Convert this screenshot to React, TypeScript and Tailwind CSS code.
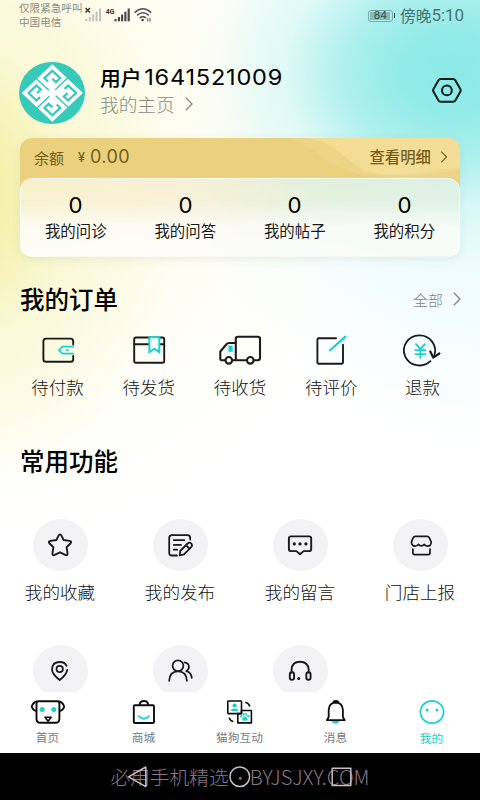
import type { ReactNode } from "react";

const INK = "#1b1b1b";
const TEAL = "#16d3cf";

type IconProps = { box: string; w: number; h: number; sw?: number; color?: string; children: ReactNode };

// Every icon shares the screen's coordinate grid through its viewBox.
function Icon({ box, w, h, sw = 1.9, color = INK, children }: IconProps) {
  return (
    <svg
      width={w}
      height={h}
      viewBox={box}
      fill="none"
      stroke={color}
      strokeWidth={sw}
      strokeLinecap="round"
      strokeLinejoin="round"
      className="block shrink-0"
    >
      {children}
    </svg>
  );
}

function Chevron({ className }: { className: string }) {
  return (
    <svg width="8" height="14" viewBox="0 0 8 14" fill="none" stroke="currentColor" strokeWidth="1.3" className={className}>
      <path d="M0.8 0.8 7 7 0.8 13.2" />
    </svg>
  );
}

function StatusBar() {
  return (
    <div className="flex h-[31px] items-start justify-between pr-4 pl-[19px]">
      <div className="flex">
        <div className="pt-px text-[10.6px] leading-[13.6px] text-[#8b8b83]">
          <div className="w-[64px] whitespace-nowrap">仅限紧急呼叫</div>
          <div>中国电信</div>
        </div>
        <svg width="70" height="31" viewBox="83 0 70 31" fill="none" className="block">
          <path d="M85.5 8l4.5 4.5M90 8l-4.5 4.5" stroke="#333" strokeWidth="1.4" />
          <g fill="#c3c3bd">
            <rect x="85.3" y="19" width="2" height="2.3" />
            <rect x="88.8" y="17" width="2" height="4.3" />
            <rect x="92.2" y="14.5" width="2" height="6.8" />
            <rect x="95.6" y="11.7" width="2" height="9.6" />
            <rect x="99" y="8.5" width="2" height="12.8" />
          </g>
          <text x="105.8" y="13.5" fontSize="7.5" fontWeight="700" fill="#333" className="font-['Roboto',sans-serif]" textLength="8.6" lengthAdjust="spacingAndGlyphs">4G</text>
          <g fill="#4a4a4a">
            <rect x="114.4" y="19" width="2.2" height="2.3" />
            <rect x="117.8" y="17" width="2.2" height="4.3" />
            <rect x="121" y="14.5" width="2.2" height="6.8" />
            <rect x="124.3" y="11.7" width="2.2" height="9.6" />
            <rect x="127.6" y="8.5" width="2.2" height="12.8" />
          </g>
          <g stroke="#555" strokeWidth="1.5">
            <path d="M134.6 12.6Q143 5 151.2 12.6" />
            <path d="M137 15.4Q143 10 148.8 15.4" />
            <path d="M139.6 18Q143 15.2 146.2 18" />
          </g>
          <circle cx="142.6" cy="20" r="1.3" fill="#444" />
          <path d="M147.8 18.2v3.4M150 18.2v3.4" stroke="#555" strokeWidth="1.1" />
        </svg>
      </div>
      <div className="flex h-[31px] items-center text-[#4d716f]">
        <div className="flex h-[12px] w-[25px] items-center rounded-[3px] border border-[#7ba9a7] p-px">
          <div className="flex h-full w-[20px] items-center justify-center bg-[#86bbb8] pt-px pl-[2px] font-['Inter',sans-serif] text-[10.5px] leading-none text-[#30504f]">84</div>
        </div>
        <div className="mr-[5px] ml-px h-[5px] w-[1.5px] bg-[#30504f]" />
        <span className="text-[15.8px] leading-none whitespace-nowrap">傍晚</span>
        <span className="font-['Roboto',sans-serif] text-[17px] leading-none tracking-[-0.1px]">5:10</span>
      </div>
    </div>
  );
}

// One quarter of the knot: a spiral channel cut into the white diamond.
function KnotQuarter({ turn }: { turn: number }) {
  return (
    <g transform={`rotate(${turn})`}>
      <path d="M-11.800 -5.600H-16.800V-16.800H-5.600V-10.800H-10.800" />
      <path d="M-0.400 -22V-4.500" strokeWidth="1.500" />
    </g>
  );
}

function Avatar() {
  return (
    <svg width="66" height="62" viewBox="19 62.3 66 62" className="block">
      <ellipse cx="52" cy="93.3" rx="33" ry="31" fill="#37cabb" />
      <g transform="translate(52.3 93.3) scale(1 .94) rotate(45)" fill="none" stroke="#37cabb" strokeWidth="2.3">
        <rect x="-21.600" y="-21.600" width="43.200" height="43.200" fill="#fff" stroke="none" />
        <KnotQuarter turn={0} />
        <KnotQuarter turn={90} />
        <KnotQuarter turn={180} />
        <KnotQuarter turn={270} />
      </g>
    </svg>
  );
}

function Profile() {
  return (
    <div className="flex h-[107px] items-start pr-[18px] pl-[19px]">
      <div className="pt-[31px]">
        <Avatar />
      </div>
      <div className="ml-[15px] flex-1 pt-[33px]">
        <div className="flex h-[25px] items-center pt-px text-[20.8px] leading-none font-medium whitespace-nowrap text-black">
          用户
          <span className="inline-block origin-left scale-x-[1.12] pl-[2px] font-['Inter',sans-serif] text-[21px] font-normal tracking-[0.7px]">1641521009</span>
        </div>
        <div className="mt-[4px] flex h-[22px] items-center text-[18.7px] leading-none font-light text-[#858b89]">
          我的主页
          <Chevron className="ml-[10px]" />
        </div>
      </div>
      <div className="pt-[45px]">
        <Icon box="432 76 30 29" w={30} h={29} sw={2} color="#0a1a1a">
          <path d="M440.7 79h12.4q1.4 0 2.2 1.3l5 8.7q.8 1.4 0 2.8l-5 8.7q-.8 1.3-2.2 1.3h-12.4q-1.4 0-2.2-1.3l-5-8.7q-.8-1.4 0-2.8l5-8.7q.8-1.3 2.2-1.3z" />
          <circle cx="446.9" cy="90.4" r="4.9" />
        </Icon>
      </div>
    </div>
  );
}

const stats = ["我的问诊", "我的问答", "我的帖子", "我的积分"];

function BalanceCard() {
  return (
    <div className="relative mx-5 h-[119px] rounded-[12px] shadow-[0_3px_10px_rgba(80,120,110,0.10)]">
      <svg width="440" height="60" viewBox="20 138 440 60" className="absolute top-0 left-0 block rounded-t-[12px]">
        <rect x="20" y="138" width="440" height="60" fill="#ebd17d" />
        <path d="M285 138C320 142 320 178 400 178H460V138z" fill="#edd587" />
        <path d="M303 138C345 140 345 174 390 174.500C420 174.500 440 168 460 168V138z" fill="#f3dd95" />
        <path d="M362 172C400 178 430 176 460 169V138H340z" fill="#f4df98" opacity=".4" />
      </svg>
      <div className="relative flex h-[38px] items-center pr-[12px] pl-[14px] text-[#756016]">
        <span className="text-[15px] leading-none font-normal">余额</span>
        <span className="ml-[14px] pt-[2px] font-['Inter',sans-serif] text-[12.500px] leading-none font-medium">¥</span>
        <span className="ml-[5px] font-['Inter',sans-serif] text-[18px] leading-none tracking-[0.4px]">0.00</span>
        <span className="ml-auto text-[15.4px] leading-none font-medium">查看明细</span>
        <Chevron className="ml-[9px] h-[12px]" />
      </div>
      <div className="relative mt-[2px] grid h-[79px] grid-cols-4 rounded-[12px] border border-white/60 bg-[linear-gradient(180deg,rgba(255,255,255,0)_0%,rgba(255,255,255,0.1)_30%,rgba(255,255,255,0.75)_62%,rgba(255,255,255,0.8)_100%),linear-gradient(90deg,#f8f1cb_0%,#f8f0d6_38%,#e2f0dd_68%,#dcf1e4_100%)]">
        {stats.map((label) => (
          <div key={label} className="flex flex-col items-center">
            <span className="mt-[15px] inline-block scale-x-[1.06] font-['Inter',sans-serif] text-[21px] leading-[24px] text-black">0</span>
            <span className="mt-[3px] text-[15.4px] leading-[18px] text-[#181818]">{label}</span>
          </div>
        ))}
      </div>
    </div>
  );
}

const orders: { label: string; icon: ReactNode }[] = [
  {
    label: "待付款",
    icon: (
      <Icon box="33.6 330 48 40" w={48} h={40}>
        <path d="M72.800 344.500V341.300Q72.800 338.600 70.200 338.600H45.600Q43 338.600 43 341.300V359.200Q43 361.800 45.600 361.800H70.200Q72.800 361.800 72.800 359.200V356" />
        <path d="M73.500 346.600H62.200L58.500 350.100 62.200 353.600H73.500M65.600 350.100H68.200" stroke={TEAL} strokeWidth="1.700" strokeLinecap="butt" />
      </Icon>
    ),
  },
  {
    label: "待发货",
    icon: (
      <Icon box="125 330 48 40" w={48} h={40}>
        <rect x="134.200" y="337.500" width="30" height="25.200" rx="1.800" />
        <path d="M134.200 344.300H164.200" />
        <path d="M149.400 337.200V352L154.300 348.600 159.300 352V337.200z" fill="#fff" stroke={TEAL} strokeWidth="2" strokeLinejoin="miter" />
      </Icon>
    ),
  },
  {
    label: "待收货",
    icon: (
      <Icon box="216 330 48 40" w={48} h={40} sw={2.1}>
        <path d="M224.500 360.200H221.500Q220.300 360.200 220.300 358.500V351.500L226.500 344.200Q227.500 343 229 343H235.200M235.800 360.200V338.800Q235.800 336.800 237.800 336.800H257.800Q260 336.800 260 339V358Q260 360.200 257.500 360.200H254.200M233 360.200H246.200" />
        <circle cx="228.800" cy="360.300" r="3.300" />
        <circle cx="250.300" cy="360.300" r="3.300" />
        <rect x="228.400" y="345.500" width="4.300" height="6.300" fill={TEAL} stroke="none" />
      </Icon>
    ),
  },
  {
    label: "待评价",
    icon: (
      <Icon box="307 330 48 40" w={48} h={40}>
        <path d="M336 338.300H318.800Q317.400 338.300 317.400 339.700V362Q317.400 363.700 319 363.700H341.500Q343 363.700 343 362V344.800" />
        <path d="M329.800 350.500 345.400 336.600" stroke={TEAL} strokeWidth="2.100" />
      </Icon>
    ),
  },
  {
    label: "退款",
    icon: (
      <Icon box="398.4 330 48 40" w={48} h={40} sw={1.8}>
        <path d="M430.800 361.200A15.600 15 0 1 1 434.600 355.500" />
        <path d="M430.700 351.500 433.600 357.600 439.800 353.500" strokeWidth="2.200" />
        <path d="M416.400 344.200 420.800 349.200 425.200 344.200M420.800 349.500V357.800M415.800 350.300H425.800M415.800 354.100H425.800" stroke={TEAL} strokeWidth="1.900" />
      </Icon>
    ),
  },
];

function Orders() {
  return (
    <section className="h-[186px]">
      <div className="flex h-[73px] items-center justify-between pt-[11px] pr-[19px] pl-5">
        <h2 className="text-[24.500px] leading-none font-medium text-black">我的订单</h2>
        <div className="flex items-center text-[15px] leading-none font-light text-[#7d8483]">
          全部
          <Chevron className="ml-[10px]" />
        </div>
      </div>
      <div className="grid grid-cols-5 px-3">
        {orders.map((o) => (
          <div key={o.label} className="flex flex-col items-center">
            {o.icon}
            <span className="mt-[6px] text-[17.500px] leading-[22px] font-light text-[#111]">{o.label}</span>
          </div>
        ))}
      </div>
    </section>
  );
}

const functions: { id: string; label?: string; icon: ReactNode }[] = [
  {
    id: "star",
    label: "我的收藏",
    icon: (
      <Icon box="45 529.500 30 30" w={30} h={30}>
        <path d="M58.700 534.900Q60 532.800 61.300 534.900L63.600 539.500 69.500 540.400Q72.300 541 70.400 543L66.600 546.700 67.500 552.600Q67.700 555.500 65.300 554.400L60 551.800 54.700 554.400Q52.300 555.500 52.500 552.600L53.400 546.700 49.600 543Q47.700 541 50.500 540.400L56.400 539.500z" />
      </Icon>
    ),
  },
  {
    id: "post",
    label: "我的发布",
    icon: (
      <Icon box="165 529.500 30 30" w={30} h={30} sw={1.8}>
        <path d="M177 555H172Q169.200 555 169.200 552.200V537.400Q169.200 534.600 172 534.600H187.400Q190.200 534.600 190.200 537.400V539" />
        <path d="M173.800 539.600H184.300M173.800 544.400H181M173.800 549.200H177.200" />
        <path d="M179.700 554.800 180.200 550.500 187.600 543Q189.700 541.300 191.300 543Q192.800 544.800 191.200 546.600L184 553.800zM186 544.700 189.300 548" />
      </Icon>
    ),
  },
  {
    id: "chat",
    label: "我的留言",
    icon: (
      <Icon box="285 529.500 30 30" w={30} h={30}>
        <path d="M291 535.900H309Q311.200 535.900 311.200 538V548.400Q311.200 550.600 309 550.600H303.600L300 553.800 296.400 550.600H291Q288.900 550.600 288.900 548.400V538Q288.900 535.900 291 535.900z" />
        <g fill={INK} stroke="none">
          <circle cx="294.300" cy="543.400" r="1.650" />
          <circle cx="300" cy="543.400" r="1.650" />
          <circle cx="305.900" cy="543.400" r="1.650" />
        </g>
      </Icon>
    ),
  },
  {
    id: "shop",
    label: "门店上报",
    icon: (
      <Icon box="405 529.500 30 30" w={30} h={30} sw={1.700}>
        <path d="M415.500 535.900H427Q428.800 535.900 429.500 537.600L431.200 541.600Q431 545.600 427.800 545.600Q425.500 545.600 424.300 543.900Q421.400 547 418.400 543.900Q417.300 545.600 414.900 545.600Q411.800 545.600 411.400 541.600L413 537.600Q413.700 535.900 415.500 535.900z" />
        <path d="M412.900 548.600V552.300Q412.900 554.100 414.700 554.100H428.200Q430 554.100 430 552.300V548.600" />
      </Icon>
    ),
  },
  {
    id: "place",
    icon: (
      <Icon box="45 656 30 30" w={30} h={30} sw={1.800}>
        <path d="M66.600 665.800Q64.800 662 59.700 662Q52.200 662 52 669.600Q52.200 674.200 59.700 680Q66.800 674.200 67.200 669.800" />
        <circle cx="59.700" cy="669" r="3.200" />
      </Icon>
    ),
  },
  {
    id: "team",
    icon: (
      <Icon box="165 656 30 30" w={30} h={30} sw={1.800}>
        <circle cx="178" cy="665.800" r="5.400" />
        <path d="M169.200 680.800Q169.500 671.300 178 671.300Q186.600 671.300 186.900 680.800M184.600 662.300Q188.900 663 188.900 667Q188.700 670 186.200 671.200Q191.500 672.600 191.700 677.800" />
      </Icon>
    ),
  },
  {
    id: "service",
    icon: (
      <Icon box="285 656 30 30" w={30} h={30} sw={1.900}>
        <path d="M291.600 672.500V669.500Q292 661.700 300 661.700Q308 661.700 308.700 669.500V672.500" />
        <rect x="289.800" y="672.300" width="4.300" height="7.600" rx="2.100" />
        <rect x="306.300" y="672.300" width="4.300" height="7.600" rx="2.100" />
        <circle cx="298.700" cy="678.500" r="1.500" fill={INK} stroke="none" />
      </Icon>
    ),
  },
];

function Functions() {
  return (
    <section className="flex h-[249px] flex-col overflow-hidden">
      <h2 className="pt-[6px] pl-5 text-[24.500px] leading-[24px] font-medium text-black">常用功能</h2>
      <div className="mt-[46px] grid shrink-0 auto-rows-[126px] grid-cols-4">
        {functions.map((f) => (
          <div key={f.id} className="flex flex-col items-center">
            <div className="flex h-[52px] w-[55px] shrink-0 items-center justify-center rounded-[50%] bg-[#f3f3f5]">{f.icon}</div>
            {f.label && <span className="mt-[10px] text-[17.600px] leading-[22px] font-light text-[#111]">{f.label}</span>}
          </div>
        ))}
      </div>
    </section>
  );
}

const tabs: { label: string; icon: ReactNode }[] = [
  {
    label: "首页",
    icon: (
      <Icon box="28 697 40 30" w={40} h={30} sw={1.900} color="#0d0d0d">
        <path d="M38.500 701.200H57.300Q59.400 701.200 59.400 703.400V718.500Q59.400 722.800 55.300 722.800H40.500Q36.500 722.800 36.500 718.500V703.400Q36.500 701.200 38.500 701.200z" />
        <path d="M37 701.500Q33.500 701.800 31.700 706.500Q33 710.500 36 710.800M59 701.500Q62.400 701.800 64.200 706.500Q63 710.500 60 710.800" />
        <path d="M45 717.200H51.200L48.100 721.200zM48.100 721V722.500" strokeWidth="1.600" />
        <circle cx="42.200" cy="709.400" r="2.500" fill={TEAL} stroke="none" />
        <circle cx="53.800" cy="709.400" r="2.500" fill={TEAL} stroke="none" />
      </Icon>
    ),
  },
  {
    label: "商城",
    icon: (
      <Icon box="124 697 40 30" w={40} h={30} sw={1.900} color="#0d0d0d">
        <rect x="133.800" y="705.300" width="20.200" height="17.700" rx="1" />
        <path d="M139.600 705Q139.800 701 143.900 701Q148 701 148.200 705" />
        <path d="M138.800 716.200Q143.900 721.300 149 716.200" stroke={TEAL} />
      </Icon>
    ),
  },
  {
    label: "猫狗互动",
    icon: (
      <Icon box="220 697 40 30" w={40} h={30} sw={1.600} color="#0d0d0d">
        <rect x="227.800" y="701" width="13.700" height="12.600" rx=".6" />
        <path d="M245.300 702.200Q248.800 703 249.800 706.500M229.200 717.600Q230 720.700 233.300 721.600" strokeLinecap="butt" />
        <path d="M241.500 710.500H251.400V722.900H237.800V713.600H241.500z" />
        <circle cx="234.600" cy="705.500" r="2.100" fill={TEAL} stroke="none" />
        <path d="M230.900 711Q231 708.500 234.600 708.500Q238.200 708.500 238.400 711z" fill={TEAL} stroke="none" />
        <g fill={TEAL} stroke="none">
          <ellipse cx="241.400" cy="716.300" rx="1.100" ry="1.400" />
          <ellipse cx="243.700" cy="714.400" rx="1" ry="1.400" />
          <ellipse cx="246.200" cy="714.400" rx="1" ry="1.400" />
          <ellipse cx="248.400" cy="716.300" rx="1.100" ry="1.400" />
          <path d="M244.900 716.200Q247.800 718 247.700 720Q246.800 721.400 244.900 720.400Q243 721.400 242.100 720Q242 718 244.900 716.200z" />
        </g>
      </Icon>
    ),
  },
  {
    label: "消息",
    icon: (
      <Icon box="316 697 40 30" w={40} h={30} sw={1.800} color="#0d0d0d">
        <path d="M331.600 721H339.400Q338.600 723.700 335.500 723.700Q332.400 723.700 331.600 721z" fill={TEAL} stroke="none" />
        <path d="M326.900 720.200H344.700L342.900 717V709.800Q342.500 702.800 335.800 702.300Q329.100 702.800 328.700 709.800V717z" />
        <path d="M333.300 702.500Q333.500 700.800 335.800 700.800Q338.100 700.800 338.300 702.500z" fill="#0d0d0d" />
      </Icon>
    ),
  },
  {
    label: "我的",
    icon: (
      <Icon box="411.700 697 40 30" w={40} h={30} sw={1.700} color={TEAL}>
        <ellipse cx="431.700" cy="712" rx="11.600" ry="11.200" />
        <circle cx="426.800" cy="710" r="1.500" fill={TEAL} stroke="none" />
        <circle cx="436.700" cy="710" r="1.500" fill={TEAL} stroke="none" />
      </Icon>
    ),
  },
];

function TabBar() {
  return (
    <nav className="flex h-[61px] bg-white pt-[5px]">
      {tabs.map((t, i) => (
        <div key={t.label} className="flex w-24 flex-col items-center pr-px">
          {t.icon}
          <span
            className={
              i === 4
                ? "mt-[2px] text-[11.700px] leading-[18px] text-[#16cdc9]"
                : "mt-px text-[11.700px] leading-[18px] text-[#7a7a7a]"
            }
          >
            {t.label}
          </span>
        </div>
      ))}
    </nav>
  );
}

function SystemNav() {
  return (
    <div className="relative flex h-[47px] items-center justify-center bg-black">
      <div className="flex w-[259px] items-center pt-px text-[19.700px] leading-none font-light whitespace-nowrap text-[#8a778b]">
        必用手机精选
        <span className="ml-auto text-[20.200px]">BYJSJXY.COM</span>
      </div>
      <svg width="480" height="47" viewBox="0 753 480 47" fill="none" stroke="#c4c0c4" strokeWidth="1.500" strokeLinejoin="round" className="absolute inset-0">
        <path d="M145.800 767V786.600L128.500 776.800z" />
        <circle cx="239.800" cy="776.700" r="9.800" />
        <circle cx="240.300" cy="778.300" r="1.600" fill="#79677a" stroke="none" />
        <rect x="332.200" y="768.300" width="18.600" height="17.200" />
      </svg>
    </div>
  );
}

export default function App() {
  return (
    <div className="flex h-[800px] w-[480px] flex-col overflow-hidden bg-white bg-[radial-gradient(ellipse_240px_190px_at_452px_72px,#8ce9e6_0%,#93ebe8_22%,rgba(165,238,235,0.85)_45%,rgba(205,246,244,0.5)_70%,rgba(255,255,255,0)_100%),radial-gradient(ellipse_330px_360px_at_500px_90px,rgba(170,240,240,0.6)_0%,rgba(215,248,248,0.4)_50%,rgba(255,255,255,0)_100%),radial-gradient(ellipse_210px_290px_at_-30px_195px,#f3efa2_0%,rgba(244,240,168,0.9)_18%,rgba(248,246,200,0.6)_50%,rgba(255,255,255,0)_100%),radial-gradient(ellipse_420px_400px_at_-40px_140px,rgba(252,248,205,0.6)_0%,rgba(255,255,255,0)_100%)] font-['Noto_Sans_CJK_SC',sans-serif]">
      <StatusBar />
      <Profile />
      <BalanceCard />
      <Orders />
      <Functions />
      <TabBar />
      <SystemNav />
    </div>
  );
}
